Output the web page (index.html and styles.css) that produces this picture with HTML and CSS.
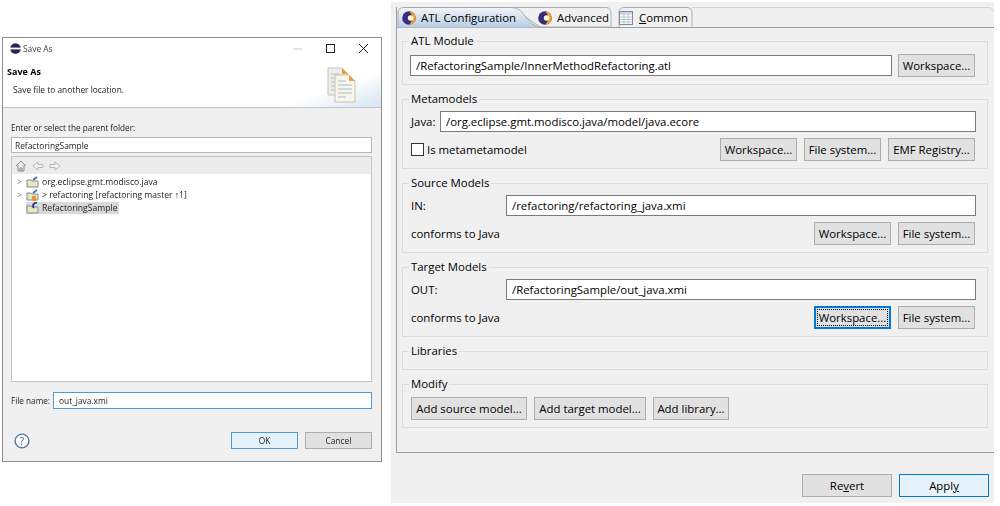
FILE: index.html
```html
<!DOCTYPE html>
<html lang="en">

<head>
    <meta charset="UTF-8">
    <title>Save As - ATL Configuration</title>
    <link rel="stylesheet" href="styles.css">
</head>

<body>
    <!-- Save As dialog -->
    <div class="dialog">
        <div class="titlebar">
            <svg class="title-icon" width="11" height="11" viewBox="0 0 11 11">
                <circle cx="5.5" cy="5.5" r="5.3" fill="#2c2255" />
                <rect x="0" y="4.6" width="11" height="1.8" fill="#fff" />
            </svg>
            <span class="title-text">Save As</span>
            <svg class="win-btn win-min" width="11" height="11" viewBox="0 0 11 11">
                <path d="M1 6H10" stroke="#c8c8c8" />
            </svg>
            <svg class="win-btn win-max" width="11" height="11" viewBox="0 0 11 11">
                <rect x="1.5" y="1.5" width="8" height="8" fill="none" stroke="#222" />
            </svg>
            <svg class="win-btn win-close" width="11" height="11" viewBox="0 0 11 11">
                <path d="M1 1L10 10M10 1L1 10" stroke="#222" />
            </svg>
        </div>

        <div class="banner">
            <div>
                <div class="banner-title">Save As</div>
                <div class="banner-sub">Save file to another location.</div>
            </div>
            <svg class="banner-icon" width="30" height="36" viewBox="0 0 30 36">
                <path d="M1 1H15L21 7V28H1Z" fill="#ececec" stroke="#c9c2a8" />
                <path d="M15 1L21 7H15Z" fill="#ef9d3c" />
                <path d="M4 7H12M4 11H17M4 15H17M4 19H17M4 23H17" stroke="#a9bccc" />
                <path d="M8 8H22L28 14V35H8Z" fill="#f7f5ec" stroke="#c9c2a8" />
                <path d="M22 8L28 14H22Z" fill="#ef9d3c" />
                <path d="M11 14H19M11 18H25M11 22H25M11 26H25M11 30H19" stroke="#a9bccc" />
            </svg>
        </div>

        <div class="dialog-body">
            <div class="small-label">Enter or select the parent folder:</div>
            <div class="small-input">RefactoringSample</div>

            <div class="tree">
                <div class="tree-toolbar">
                    <svg width="12" height="12" viewBox="0 0 12 12">
                        <path d="M1 6L6 1L11 6M3 5V11H9V5M5 11V8H7V11" fill="none" stroke="#8c8c8c" />
                    </svg>
                    <svg width="12" height="10" viewBox="0 0 12 10">
                        <path d="M1 5L6 1V3.5H11V6.5H6V9Z" fill="#f4f4f4" stroke="#b4b4b4" />
                    </svg>
                    <svg width="12" height="10" viewBox="0 0 12 10">
                        <path d="M11 5L6 1V3.5H1V6.5H6V9Z" fill="#f4f4f4" stroke="#b4b4b4" />
                    </svg>
                </div>
                <div class="tree-rows">
                    <div class="tree-row">
                        <span class="twisty">&gt;</span>
                        <svg class="folder" width="13" height="12" viewBox="0 0 13 12">
                            <path d="M1 4H5L6 5H12V11H1Z" fill="#f2e4b4" stroke="#6f8fb5" />
                            <path d="M7 4L11 1" stroke="#3f6fa8" stroke-width="1.6" />
                        </svg>
                        <span>org.eclipse.gmt.modisco.java</span>
                    </div>
                    <div class="tree-row">
                        <span class="twisty">&gt;</span>
                        <svg class="folder" width="13" height="12" viewBox="0 0 13 12">
                            <path d="M1 4H5L6 5H12V11H1Z" fill="#f2e4b4" stroke="#6f8fb5" />
                            <path d="M7 4L11 1" stroke="#3f6fa8" stroke-width="1.6" />
                            <rect x="6" y="7" width="4" height="5" fill="#e49a2c" />
                        </svg>
                        <span>&gt; refactoring [refactoring master ↑1]</span>
                    </div>
                    <div class="tree-row">
                        <span class="twisty"></span>
                        <span class="tree-selected">
                            <svg class="folder" width="13" height="12" viewBox="0 0 13 12">
                                <path d="M1 4H5L6 5H12V11H1Z" fill="#f2e4b4" stroke="#6f8fb5" />
                                <path d="M8 6A3 3 0 0 1 11 1" fill="none" stroke="#3b2c86" stroke-width="1.8" />
                            </svg>
                            <span>RefactoringSample</span>
                        </span>
                    </div>
                </div>
            </div>

            <div class="file-row">
                <span class="small-label">File name:</span>
                <div class="small-input small-input-focus">out_java.xmi</div>
            </div>

            <div class="dialog-footer">
                <svg width="16" height="16" viewBox="0 0 16 16">
                    <circle cx="8" cy="8" r="6.9" fill="#f6f8fa" stroke="#54779a" stroke-width="1.4" />
                    <text x="8" y="11.5" text-anchor="middle" class="help-mark">?</text>
                </svg>
                <div class="dialog-btn dialog-btn-ok">OK</div>
                <div class="dialog-btn">Cancel</div>
            </div>
        </div>
    </div>

    <!-- ATL run configuration -->
    <div class="panel">
        <div class="folder-box">
            <div class="tabs">
                <svg class="tabs-bg" width="597" height="21" viewBox="0 0 597 21">
                    <defs>
                        <linearGradient id="tabBlue" x1="0" y1="0" x2="0" y2="1">
                            <stop offset="0" stop-color="#f3f5f7" />
                            <stop offset="1" stop-color="#b5cde6" />
                        </linearGradient>
                    </defs>
                    <path d="M295 0.5H592Q596 0.5 596.5 5" fill="none" stroke="#d4d4d4" />
                    <path d="M0 20.5H597" stroke="#a0a0a0" />
                    <path d="M222 20V6Q222 .5 227 .5H290Q295 .5 295 6V20" fill="#f0f0f0" stroke="#b0b0b0" />
                    <path d="M115 .5H209Q214 .5 214 6V20H143Z" fill="#f0f0f0" stroke="#b0b0b0" />
                    <path d="M1 21V6Q1 .5 7 .5H115C128 .5 130 20 144 20V21Z" fill="url(#tabBlue)" stroke="#a8a8a8" />
                </svg>
                <div class="tab tab-config">
                    <svg width="14" height="14" viewBox="0 0 14 14">
                        <use href="#atlIcon" />
                    </svg>
                    <span>ATL Configuration</span>
                </div>
                <div class="tab tab-advanced">
                    <svg width="14" height="14" viewBox="0 0 14 14">
                        <defs>
                            <g id="atlIcon">
                                <circle cx="7" cy="7" r="6.8" fill="#3a2a80" />
                                <path d="M7 .2A6.8 6.8 0 0 1 7 13.800A9 9 0 0 0 7 .2Z" fill="#eba52e" />
                                <circle cx="8.600" cy="7" r="2.800" fill="#fdf6d8" />
                            </g>
                        </defs>
                        <use href="#atlIcon" />
                    </svg>
                    <span>Advanced</span>
                </div>
                <div class="tab tab-common">
                    <svg width="14" height="14" viewBox="0 0 14 14">
                        <rect x=".5" y=".5" width="13" height="13" fill="#fafafa" stroke="#7f8b99" />
                        <rect x="1" y="1" width="12" height="2.500" fill="#c7d3e0" />
                        <path d="M1 6H13M1 8.500H13M1 11H13M5 3V13M9 3V13" stroke="#b8c4d0" />
                    </svg>
                    <span><u>C</u>ommon</span>
                </div>
            </div>

            <div class="folder-body">
                <fieldset class="group group-module">
                    <legend>ATL Module</legend>
                    <div class="row row-first">
                        <input class="text-input text-input-out" type="text" value="/RefactoringSample/InnerMethodRefactoring.atl">
                        <button class="btn btn-md">Workspace...</button>
                    </div>
                </fieldset>

                <fieldset class="group">
                    <legend>Metamodels</legend>
                    <div class="row-field">
                        <label class="field-label field-label-sm">Java:</label>
                        <input class="text-input" type="text" value="/org.eclipse.gmt.modisco.java/model/java.ecore">
                    </div>
                    <div class="row-actions">
                        <label class="check">
                            <span class="check-box"></span>
                            Is metametamodel
                        </label>
                        <button class="btn btn-md">Workspace...</button>
                        <button class="btn btn-md">File system...</button>
                        <button class="btn btn-lg">EMF Registry...</button>
                    </div>
                </fieldset>

                <fieldset class="group">
                    <legend>Source Models</legend>
                    <div class="row-field">
                        <label class="field-label">IN:</label>
                        <input class="text-input" type="text" value="/refactoring/refactoring_java.xmi">
                    </div>
                    <div class="row-actions">
                        <span class="conforms">conforms to Java</span>
                        <button class="btn btn-md">Workspace...</button>
                        <button class="btn btn-md">File system...</button>
                    </div>
                </fieldset>

                <fieldset class="group">
                    <legend>Target Models</legend>
                    <div class="row-field">
                        <label class="field-label">OUT:</label>
                        <input class="text-input" type="text" value="/RefactoringSample/out_java.xmi">
                    </div>
                    <div class="row-actions">
                        <span class="conforms">conforms to Java</span>
                        <button class="btn btn-md btn-focus"><span>Workspace...</span></button>
                        <button class="btn btn-md">File system...</button>
                    </div>
                </fieldset>

                <fieldset class="group group-libraries">
                    <legend>Libraries</legend>
                </fieldset>

                <fieldset class="group group-module">
                    <legend>Modify</legend>
                    <div class="row row-first row-modify">
                        <button class="btn btn-source">Add source model...</button>
                        <button class="btn btn-target">Add target model...</button>
                        <button class="btn btn-library">Add library...</button>
                    </div>
                </fieldset>
            </div>
        </div>

        <div class="panel-footer">
            <button class="btn btn-footer">Re<u>v</u>ert</button>
            <button class="btn btn-footer btn-apply">Appl<u>y</u></button>
        </div>
    </div>
</body>

</html>
```

FILE: styles.css
```css
body {
    margin: 0;
    background-color: #fff;
    font-family: "Open Sans", "Noto Sans", sans-serif;
    color: #000;
    display: flex;
    align-items: flex-start;
}

/* left dialog, the original is a scaled picture so it is a bit soft */
.dialog {
    box-sizing: border-box;
    width: 380px;
    height: 425px;
    margin: 37px 0 0 2px;
    border: 1px solid #8e8e8e;
    background-color: #f0f0f0;
    font-size: 8.4px;
    color: #222;
    filter: blur(0.3px);
}

.titlebar {
    height: 21px;
    background-color: #fff;
    display: flex;
    align-items: center;
    padding-left: 7px;
}

.title-text {
    margin-left: 2px;
    flex: 1;
    color: #444;
}

.win-btn {
    margin-right: 22px;
}

.win-close {
    margin-right: 12px;
}

.banner {
    box-sizing: border-box;
    height: 49px;
    background: linear-gradient(160deg, #fff 80%, #d6e4f3 100%);
    border-bottom: 1px solid #c4c4c4;
    display: flex;
    justify-content: space-between;
    padding: 6px 24px 0 4px;
}

.banner-title {
    font-weight: bold;
    font-size: 9px;
    line-height: 14px;
    color: #000;
}

.banner-sub {
    margin: 4px 0 0 6px;
    line-height: 14px;
}

.banner-icon {
    margin-top: 2px;
}

.dialog-body {
    padding: 13px 9px 0 8px;
}

.small-label {
    font-size: 8.2px;
    line-height: 14px;
    white-space: nowrap;
}

.small-input {
    box-sizing: border-box;
    height: 16px;
    margin-top: 2px;
    padding: 1px 0 0 3px;
    line-height: 14px;
    background-color: #fff;
    border: 1px solid #b5b5b5;
}

.tree {
    box-sizing: border-box;
    height: 226px;
    margin-top: 3px;
    background-color: #fff;
    border: 1px solid #c4c4c4;
}

.tree-toolbar {
    height: 17px;
    background-color: #ececec;
    display: flex;
    align-items: center;
    gap: 5px;
    padding-left: 3px;
}

.tree-rows {
    padding-top: 1px;
}

.tree-row {
    height: 13px;
    display: flex;
    align-items: center;
    font-size: 8.6px;
    white-space: nowrap;
}

.twisty {
    width: 14px;
    padding-left: 5px;
    box-sizing: border-box;
    color: #777;
}

.folder {
    margin-right: 3px;
    flex-shrink: 0;
}

.tree-selected {
    display: flex;
    align-items: center;
    background-color: #d9d9d9;
    padding-right: 2px;
}

.file-row {
    display: flex;
    align-items: center;
    gap: 3px;
    margin-top: 10px;
}

.file-row .small-input {
    flex: 1;
    height: 17px;
    margin-top: 0;
    padding-left: 5px;
}

.small-input-focus {
    border-color: #4c9ad8;
}

.dialog-footer {
    display: flex;
    align-items: center;
    gap: 7px;
    margin-top: 23px;
}

.dialog-footer svg {
    margin-left: 3px;
    margin-right: auto;
}

.help-mark {
    font-size: 10px;
    fill: #3f5f7f;
}

.dialog-btn {
    box-sizing: border-box;
    width: 67px;
    height: 17px;
    line-height: 15px;
    text-align: center;
    background-color: #e1e1e1;
    border: 1px solid #adadad;
}

.dialog-btn-ok {
    background-color: #e5f1fb;
    border-color: #4c9ad8;
}

/* right panel */
.panel {
    box-sizing: border-box;
    width: 603px;
    height: 501px;
    margin: 2px 0 0 9px;
    padding: 5px 0 0 5px;
    background-color: #f0f0f0;
    font-size: 11.4px;
}

.folder-box {
    box-sizing: border-box;
    height: 446px;
    border-left: 1px solid #a0a0a0;
    border-bottom: 1px solid #a0a0a0;
}

.tabs {
    position: relative;
    height: 21px;
    display: flex;
    align-items: center;
}

.tabs-bg {
    position: absolute;
    left: 0;
    top: 0;
}

.tab {
    position: relative;
    display: flex;
    align-items: center;
    white-space: nowrap;
}

.tab-config {
    width: 139px;
    gap: 5px;
    padding-left: 5px;
    box-sizing: border-box;
}

.tab-advanced {
    width: 81px;
    gap: 5px;
    padding-left: 2px;
    box-sizing: border-box;
}

.tab-common {
    gap: 6px;
    padding-left: 2px;
}

.folder-body {
    display: flex;
    flex-direction: column;
    gap: 6px;
    padding: 5px 6px 0 5px;
}

.group {
    box-sizing: border-box;
    height: 78px;
    min-width: 0;
    margin: 0;
    padding: 4px 11px 0 8px;
    border: 1px solid #dcdcdc;
}

.group legend {
    height: 16px;
    line-height: 16px;
    padding: 0 2px;
    margin-left: -2px;
}

.group-module {
    height: 52px;
}

.group-libraries {
    height: 27px;
}

.row {
    display: flex;
    align-items: center;
    gap: 6px;
}

.row-first {
    margin-top: 1px;
    padding-right: 1px;
}

.row-modify {
    gap: 7px;
}

.row-field {
    display: flex;
    align-items: center;
}

.row-actions {
    display: flex;
    align-items: center;
    justify-content: flex-end;
    gap: 7px;
    margin-top: 6px;
    padding-right: 1px;
}

.field-label {
    width: 95px;
}

.field-label-sm {
    width: 29px;
}

.text-input {
    box-sizing: border-box;
    flex: 1;
    min-width: 0;
    height: 21px;
    padding: 0 5px;
    border: 1px solid #7a7a7a;
    border-radius: 0;
    outline: none;
    background-color: #fff;
    font-family: inherit;
    font-size: 11.4px;
    color: #000;
}

.text-input-out {
    margin-left: -1px;
}

.check {
    display: flex;
    align-items: center;
    gap: 3px;
    margin-right: auto;
}

.check-box {
    box-sizing: border-box;
    width: 13px;
    height: 13px;
    background-color: #fff;
    border: 1px solid #333;
}

.conforms {
    margin-right: auto;
}

.btn {
    box-sizing: border-box;
    height: 23px;
    padding: 0;
    background-color: #e1e1e1;
    border: 1px solid #adadad;
    border-radius: 0;
    font-family: inherit;
    font-size: 11.4px;
    color: #000;
    white-space: nowrap;
}

.btn-md {
    width: 77px;
}

.btn-lg {
    width: 87px;
}

.btn-source {
    width: 116px;
}

.btn-target {
    width: 112px;
}

.btn-library {
    width: 76px;
}

.btn-focus {
    border: 2px solid #0078d7;
}

.btn-focus span {
    display: block;
    border: 1px dotted #000;
    line-height: 15px;
    margin: 0 1px;
}

.panel-footer {
    display: flex;
    justify-content: flex-end;
    gap: 7px;
    padding: 21px 5px 0 0;
}

.btn-footer {
    width: 90px;
}

.btn-apply {
    background-color: #e5f1fb;
    border-color: #0078d7;
}
```
